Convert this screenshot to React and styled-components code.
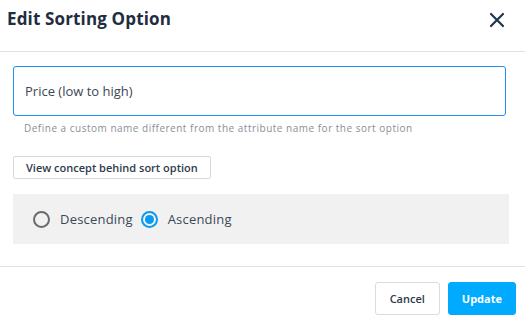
import React from 'react';
import styled, { createGlobalStyle } from 'styled-components';

const Global = createGlobalStyle`
  html, body {
    margin: 0;
    padding: 0;
    background: #fff;
  }
  body {
    font-family: "Open Sans", "Noto Sans", sans-serif;
    color: #2b3a4d;
  }
`;

const Modal = styled.div`
  width: 525px;
  height: 323px;
  background: #fff;
  display: flex;
  flex-direction: column;
`;

const Header = styled.div`
  height: 52px;
  box-sizing: border-box;
  border-bottom: 1px solid #dde2ea;
  display: flex;
  align-items: flex-start;
  justify-content: space-between;
  padding: 7px 20px 0 7px;
`;

const Title = styled.h2`
  margin: 0;
  font-size: 17px;
  font-weight: 700;
  color: #1f2d3f;
  letter-spacing: 0.15px;
`;

const Close = styled.button`
  border: none;
  background: none;
  padding: 0;
  margin-top: 5px;
  width: 16px;
  height: 16px;
  cursor: pointer;
  display: flex;
`;

const Body = styled.div`
  padding: 14px 16px 0 13px;
  height: 215px;
  box-sizing: border-box;
  border-bottom: 1px solid #dde2ea;
`;

const Input = styled.input`
  display: block;
  width: 493px;
  height: 50px;
  box-sizing: border-box;
  border: 1px solid #1e8ff0;
  border-radius: 3px;
  padding: 0 11px;
  font-family: inherit;
  font-size: 13px;
  color: #3b4858;
  outline: none;
`;

const Help = styled.div`
  font-size: 10px;
  color: #8a8f96;
  padding: 5px 0 0 11px;
  height: 27px;
  box-sizing: border-box;
  letter-spacing: 0.5px;
`;

const LinkButton = styled.button`
  margin-top: 13px;
  height: 23px;
  padding: 0 12px;
  border: 1px solid #d3dae3;
  border-radius: 2px;
  background: #fff;
  font-family: inherit;
  font-size: 11px;
  font-weight: 600;
  color: #2f3b4b;
  cursor: pointer;
  display: block;
`;

const Panel = styled.div`
  margin-top: 15px;
  width: 496px;
  height: 50px;
  background: #f1f1f1;
  display: flex;
  align-items: center;
  padding-left: 20px;
  box-sizing: border-box;
  gap: 8px;
`;

const Option = styled.label`
  display: flex;
  align-items: center;
  gap: 10px;
  font-size: 13px;
  color: #3b4858;
  cursor: pointer;
  letter-spacing: 0.2px;
`;

const Radio = styled.span`
  width: 17px;
  height: 17px;
  box-sizing: border-box;
  border-radius: 50%;
  border: 2px solid ${p => (p.$checked ? '#0a9af0' : '#6b6b6b')};
  display: flex;
  align-items: center;
  justify-content: center;
  &::after {
    content: '';
    display: ${p => (p.$checked ? 'block' : 'none')};
    width: 9px;
    height: 9px;
    border-radius: 50%;
    background: #0a9af0;
  }
`;

const Footer = styled.div`
  display: flex;
  justify-content: flex-end;
  gap: 8px;
  padding: 15px 9px 0 0;
`;

const Button = styled.button`
  height: 33px;
  padding: 0 ${p => (p.$primary ? '13px' : '14px')};
  border-radius: 3px;
  border: 1px solid ${p => (p.$primary ? '#00aaff' : '#d6dce3')};
  background: ${p => (p.$primary ? '#00aaff' : '#fff')};
  color: ${p => (p.$primary ? '#fff' : '#2f3b4b')};
  font-family: inherit;
  font-size: 11px;
  font-weight: ${p => (p.$primary ? 700 : 600)};
  cursor: pointer;
`;

export default function App() {
  const [order, setOrder] = React.useState('asc');
  return (
    <>
      <Global />
      <Modal>
        <Header>
          <Title>Edit Sorting Option</Title>
          <Close aria-label="Close">
            <svg width="16" height="16" viewBox="0 0 16 16">
              <path d="M2 2 L14 14 M14 2 L2 14" stroke="#1f3550" strokeWidth="2.2" strokeLinecap="round" />
            </svg>
          </Close>
        </Header>
        <Body>
          <Input defaultValue="Price (low to high)" />
          <Help>Define a custom name different from the attribute name for the sort option</Help>
          <LinkButton>View concept behind sort option</LinkButton>
          <Panel>
            <Option onClick={() => setOrder('desc')}>
              <Radio $checked={order === 'desc'} />
              Descending
            </Option>
            <Option onClick={() => setOrder('asc')}>
              <Radio $checked={order === 'asc'} />
              Ascending
            </Option>
          </Panel>
        </Body>
        <Footer>
          <Button>Cancel</Button>
          <Button $primary>Update</Button>
        </Footer>
      </Modal>
    </>
  );
}
